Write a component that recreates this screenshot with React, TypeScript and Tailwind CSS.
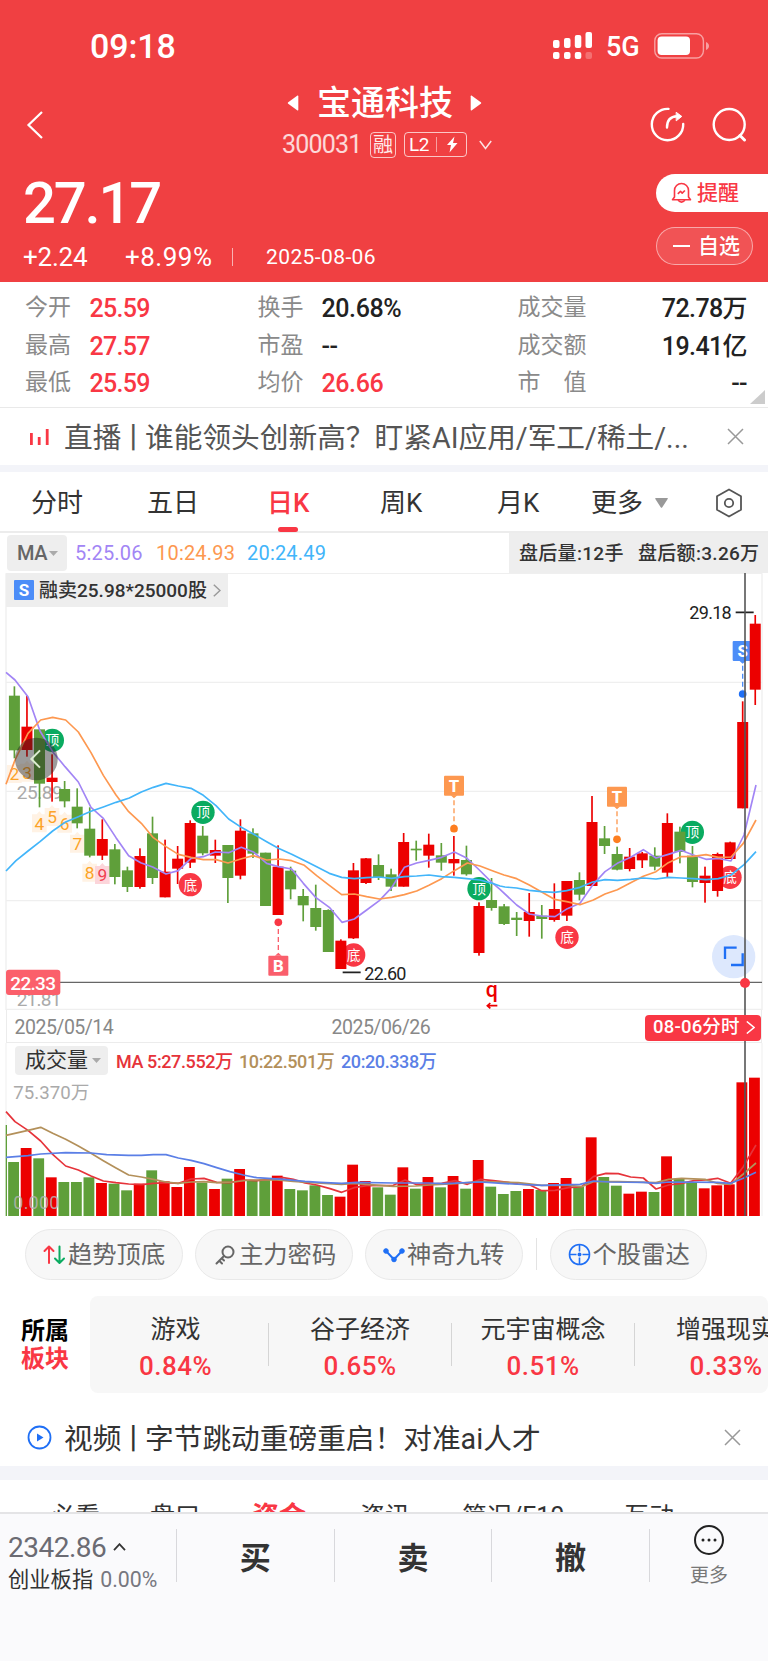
import React from 'react';
import clsx from 'clsx';

type Candle = [high: number, top: number, bottom: number, low: number, up: 0 | 1];

// chart units are a third of a pixel
const STEP = 37.67;

const candles: Candle[] = [
  [349, 377, 541, 565, 0], [377, 470, 540, 560, 1], [478, 478, 641, 712, 0], [553, 623, 636, 695, 1],
  [633, 657, 694, 712, 0], [655, 710, 760, 775, 0], [712, 776, 857, 862, 0], [748, 807, 857, 870, 1],
  [822, 838, 921, 943, 0], [890, 901, 951, 966, 0], [835, 858, 951, 956, 1], [740, 790, 924, 942, 0],
  [809, 905, 982, 982, 1], [828, 866, 896, 942, 1], [751, 759, 878, 894, 1], [768, 797, 850, 856, 0],
  [809, 840, 857, 879, 1], [825, 825, 924, 999, 0], [748, 782, 917, 928, 1], [775, 790, 851, 864, 0],
  [848, 848, 1008, 1008, 0], [826, 890, 1035, 1035, 1], [890, 902, 958, 988, 0], [957, 978, 1006, 1054, 0],
  [944, 1014, 1071, 1082, 0], [1018, 1020, 1146, 1146, 0], [1108, 1112, 1197, 1197, 1], [879, 901, 1105, 1107, 1],
  [864, 865, 939, 942, 1], [853, 885, 921, 930, 0], [896, 913, 950, 963, 0], [789, 816, 950, 950, 1],
  [812, 836, 841, 872, 0], [791, 824, 857, 893, 1], [819, 856, 878, 902, 0], [798, 867, 880, 917, 1],
  [827, 870, 913, 917, 0], [997, 1008, 1149, 1157, 1], [924, 990, 1014, 1022, 0], [1002, 1009, 1062, 1065, 0],
  [1026, 1043, 1050, 1098, 0], [969, 1026, 1053, 1100, 1], [1005, 1037, 1047, 1106, 0], [940, 1017, 1050, 1055, 1],
  [933, 933, 1037, 1053, 1], [907, 930, 974, 991, 0], [678, 756, 948, 948, 1], [768, 805, 828, 852, 0],
  [830, 852, 899, 901, 0], [834, 860, 897, 904, 1], [846, 850, 871, 894, 1], [832, 857, 890, 901, 0],
  [730, 759, 908, 921, 1], [770, 785, 846, 880, 0], [828, 857, 936, 952, 0], [890, 917, 939, 998, 1],
  [848, 852, 963, 980, 1], [815, 817, 867, 867, 1], [394, 456, 715, 715, 1], [135, 161, 359, 405, 1],
];

const volumes = [
  486, 444, 475, 532, 546, 546, 532, 549, 551, 571, 551, 511, 544, 561, 501, 548, 567, 536, 507, 540,
  538, 527, 567, 571, 556, 585, 590, 494, 543, 562, 584, 502, 566, 531, 562, 528, 566, 480, 560, 582,
  573, 567, 570, 549, 534, 560, 412, 531, 557, 581, 575, 576, 469, 537, 546, 565, 556, 553, 247, 233,
];

const MA5 = '18,307 45,330 84,380 120,483 158,545 195,590 235,636 273,712 310,745 348,803 386,857 422,878 458,891 498,912 535,902 573,865 610,860 646,846 686,848 724,832 762,847 800,880 835,890 875,897 910,940 947,982 988,1012 1026,1057 1063,1047 1100,1020 1138,992 1175,953 1213,892 1250,879 1287,871 1325,862 1363,846 1400,864 1438,900 1476,938 1500,958 1550,1005 1588,1032 1625,1038 1665,1040 1702,1016 1740,1000 1778,945 1815,905 1852,880 1892,862 1930,839 1968,864 2005,853 2043,841 2080,855 2118,868 2155,865 2193,873 2232,795 2268,645';
const MA10 = '18,643 45,570 84,490 122,450 158,442 197,450 235,486 273,548 310,616 348,675 386,725 424,760 460,803 498,830 535,853 573,862 610,869 648,869 684,879 722,867 760,857 800,870 838,867 875,872 913,886 950,917 988,946 1025,974 1063,972 1100,980 1138,987 1175,982 1213,974 1250,963 1287,946 1325,926 1363,902 1402,879 1440,888 1477,902 1512,915 1550,926 1588,945 1625,966 1663,988 1700,995 1740,1004 1780,990 1815,972 1852,959 1892,938 1930,919 1968,905 2005,878 2043,860 2080,859 2118,854 2155,862 2193,861 2230,820 2268,750';
const MA20 = '18,903 48,872 84,843 120,815 158,783 195,757 235,740 273,724 310,711 348,697 388,684 424,666 460,652 498,640 535,648 573,655 610,676 648,707 686,747 724,772 760,792 800,815 835,835 875,853 910,870 950,890 988,910 1025,922 1063,926 1100,923 1138,921 1175,925 1213,920 1250,918 1287,915 1325,920 1363,922 1400,926 1440,930 1477,940 1500,948 1515,951 1550,954 1588,961 1625,965 1663,967 1700,962 1740,952 1778,936 1815,929 1852,931 1892,928 1930,924 1968,927 2005,922 2043,924 2080,926 2118,929 2155,926 2193,915 2232,884 2268,845';

const VOL5 = '18,335 45,365 84,391 122,423 158,463 197,498 235,510 273,528 310,543 348,548 386,552 424,554 460,550 498,548 535,550 573,537 612,535 650,547 690,548 730,540 770,542 810,538 850,533 880,538 915,549 950,555 990,566 1025,577 1062,563 1100,557 1180,556 1215,540 1247,553 1285,553 1325,550 1365,542 1402,553 1442,538 1480,542 1518,546 1555,552 1590,555 1625,572 1665,571 1705,563 1745,560 1780,530 1818,520 1855,521 1892,531 1930,534 1968,567 2006,555 2045,550 2082,542 2115,540 2153,535 2192,550 2230,500 2268,435';
const VOL10 = '18,406 84,391 122,382 158,400 197,418 235,438 273,460 310,482 348,504 386,525 424,531 460,538 498,546 535,550 573,546 612,545 650,548 700,546 750,540 830,540 880,544 950,549 1025,553 1062,550 1100,553 1180,559 1247,558 1290,555 1365,551 1440,545 1555,548 1625,556 1705,556 1745,560 1780,545 1855,545 1968,548 2006,538 2045,535 2115,538 2153,550 2192,553 2230,522 2268,489';
const VOL20 = '18,472 84,467 122,462 197,458 273,459 320,464 386,466 424,466 460,464 498,464 535,474 573,481 612,491 650,503 690,515 730,525 770,533 850,538 915,544 960,547 1025,550 1070,547 1180,549 1285,549 1330,551 1440,546 1518,551 1625,556 1740,553 1780,543 1830,546 1930,547 1968,550 2006,546 2153,547 2192,550 2230,535 2268,517';

const turns = [
  { n: 2, x: 43, y: 612 }, { n: 3, x: 81, y: 608 }, { n: 4, x: 118, y: 760 }, { n: 5, x: 156, y: 741 },
  { n: 6, x: 194, y: 761 }, { n: 7, x: 232, y: 821 }, { n: 8, x: 269, y: 908 }, { n: 9, x: 307, y: 915 },
];

const peaks = [
  { t: '顶', x: 157, y: 511 }, { t: '顶', x: 609, y: 727 }, { t: '底', x: 571, y: 944 },
  { t: '底', x: 1061, y: 1155 }, { t: '顶', x: 1437, y: 956 }, { t: '底', x: 1701, y: 1102 },
  { t: '顶', x: 2077, y: 787 }, { t: '底', x: 2190, y: 922 },
];

const trades = [
  { t: 'T', x: 1362, y: 617, dot: 776, fill: '#fd9850', dotFill: '#fd7e20' },
  { t: 'T', x: 1851, y: 650, dot: 808, fill: '#fd9850', dotFill: '#fd7e20' },
  { t: 'S', x: 2228, y: 213, dot: 372, fill: '#4c8df8', dotFill: '#1f6ff5' },
  { t: 'B', x: 835, y: 1157, dot: 1057, fill: '#fa5f6c', dotFill: '#f93744' },
];

function StatusBar() {
  return (
    <div className="mt-4 flex h-[60px] items-center pl-[90px] text-white">
      <span className="w-[463px] text-[34px] font-medium leading-none tracking-[-0.1px]">09:18</span>
      <svg className="h-7 w-10" viewBox="0 0 40 28" fill="#fff">
        <rect x="0" y="8" width="6.5" height="8" rx="2" />
        <rect x="11" y="6" width="6.5" height="10" rx="2" />
        <rect x="21.8" y="3" width="6.5" height="13" rx="2" />
        <rect x="32.5" y="0" width="6.5" height="16" rx="2" />
        <rect x="0" y="20" width="6.5" height="7" rx="2" />
        <rect x="11" y="20" width="6.5" height="7" rx="2" />
        <rect x="21.8" y="20" width="6.5" height="7" rx="2" />
        <rect x="32.5" y="20" width="6.5" height="7" rx="2" opacity=".25" />
      </svg>
      <span className="ml-[13px] w-[48px] pt-0.5 text-[27px] font-medium leading-none">5G</span>
      <svg className="h-[26px] w-[56px]" viewBox="0 0 56 26">
        <rect x=".8" y=".8" width="48.6" height="24.2" rx="7" fill="none" stroke="#fff" strokeOpacity=".5" strokeWidth="1.4" />
        <rect x="3.6" y="3.6" width="32.4" height="18.4" rx="4" fill="#fff" />
        <path d="M52 9c4 1.5 4 6.5 0 8z" fill="#fff" opacity=".5" />
      </svg>
    </div>
  );
}

function Header() {
  return (
    <header className="h-[282px] shrink-0 overflow-hidden bg-[#f04042] text-white">
      <StatusBar />
      <div className="flex h-[97px] items-center pl-[26px]">
        <svg className="h-[30px] w-[18px]" viewBox="0 0 18 30" fill="none" stroke="#fff" strokeWidth="2.2">
          <path d="M16 2 2.5 15 16 28" />
        </svg>
        <div className="ml-[236px] flex h-full w-[214px] flex-col pt-[9px]">
          <div className="flex h-9 items-center">
            <svg className="ml-[7px] h-4 w-3" viewBox="0 0 12 16" fill="#fff">
              <path d="M10.5.6 1.2 7.2q-1 .8 0 1.6l9.3 6.6q.8.4.8-.6V1.2q0-1-.8-.6z" />
            </svg>
            <span className="ml-[18px] w-[141px] text-[34px] font-medium leading-9">宝通科技</span>
            <svg className="ml-3 h-4 w-3" viewBox="0 0 12 16" fill="#fff">
              <path d="M1.5.6l9.3 6.6q1 .8 0 1.6l-9.3 6.6q-.8.4-.8-.6V1.2q0-1 .8-.6z" />
            </svg>
          </div>
          <div className="mt-[10px] flex h-[27px] items-center pl-0.5">
            <span className="w-[88px] text-[25px] leading-none tracking-[-0.8px] text-white/80">300031</span>
            <span className="flex h-[26px] w-[26px] items-center justify-center rounded border border-white/70 text-[20px] leading-none text-white/90">融</span>
            <span className="ml-2 flex h-[25px] w-[63px] items-center rounded border border-white/70 pl-1 text-[19px] leading-none tracking-[-0.5px]">
              L2
              <i className="ml-[7px] h-[15px] w-px bg-white/50" />
              <svg className="ml-[9px] h-[17px] w-3" viewBox="0 0 12 17" fill="#fff">
                <path d="M8.5.5 1 9h4L3.5 16.5 11.5 7H7z" />
              </svg>
            </span>
            <svg className="ml-3 h-2.5 w-[13px]" viewBox="0 0 13 10" fill="none" stroke="#fff" strokeOpacity=".85" strokeWidth="1.5">
              <path d="M.8 1 6.5 8.5 12.2 1" />
            </svg>
          </div>
        </div>
        <div className="ml-[156px] flex gap-[27px]">
          <svg className="h-[35px] w-[35px]" viewBox="0 0 35 35" fill="none" stroke="#fff" strokeWidth="2.4" strokeLinecap="round">
            <path d="M18.5 1.9A15.7 15.7 0 1 0 33.2 17" />
            <path d="M17 20.5C17 13 20 9.5 27 9.3" />
            <path d="M26.5 5.5 31.8 9.4 26.5 13.6z" fill="#fff" strokeWidth="1" strokeLinejoin="round" />
          </svg>
          <svg className="h-[35px] w-[35px]" viewBox="0 0 35 35" fill="none" stroke="#fff" strokeWidth="2.4" strokeLinecap="round">
            <circle cx="17.2" cy="17.5" r="15.5" />
            <path d="M28 28.5 32.5 33" strokeWidth="3" />
          </svg>
        </div>
      </div>
      <div className="flex justify-between">
        <div className="pl-[23px]">
          <div className="h-[60px] text-[58px] font-medium leading-[60px] tracking-[-2.2px]">27.17</div>
          <div className="flex h-[48px] items-center text-[26px] leading-none">
            <span className="w-[102px] tracking-[-0.2px]">+2.24</span>
            <span className="w-[107px] tracking-[0.5px]">+8.99%</span>
            <i className="h-[18px] w-px bg-white/60" />
            <span className="ml-[33px] text-[21px] tracking-[0.4px]">2025-08-06</span>
          </div>
        </div>
        <div className="w-28 pt-px">
          <div className="flex h-[38px] items-center rounded-l-full bg-white pl-[15px] text-[21px] font-medium leading-none text-[#f93744]">
            <svg className="mr-[5px] h-[22px] w-[21px]" viewBox="0 0 21 22" fill="none" stroke="#f93744" strokeWidth="1.6" strokeLinejoin="round">
              <path d="M3.5 15V8.5a7 7 0 0 1 14 0V15l2 2.8H1.5z" />
              <path d="M7 18.3q3.5 3.5 7 0M6.8 11.8l2.7-2.5 1.700 1.8 2.7-2.6" />
            </svg>
            提醒
          </div>
          <div className="mt-[15px] flex h-[38px] w-[97px] items-center rounded-full border border-white/50 bg-white/10 pl-4 text-[21px] font-medium leading-none">
            <i className="mr-[8px] h-0.5 w-[17px] bg-white" />
            自选
          </div>
        </div>
      </div>
    </header>
  );
}

const stats = [
  ['今开', '25.59', true, '换手', '20.68%', false, '成交量', '72.78万'],
  ['最高', '27.57', true, '市盈', '--', false, '成交额', '19.41亿'],
  ['最低', '25.59', true, '均价', '26.66', true, '市　值', '--'],
] as const;

function Stats() {
  return (
    <section className="relative h-[126px] shrink-0 border-b border-[#e9e9e9] pt-[7px]">
      {stats.map(([a, av, ar, b, bv, br, c, cv]) => (
        <div key={a} className="flex h-[37.6px] items-center pl-[25px] pr-[21px] text-[23px] leading-none text-[#8a8a8a]">
          <span className="w-[64.5px]">{a}</span>
          <span className={clsx('w-[168px] pt-0.5 text-[25px] font-medium tracking-[-0.7px]', ar ? 'text-[#f93744]' : 'text-[#222]')}>{av}</span>
          <span className="w-[64px]">{b}</span>
          <span className={clsx('w-[196px] pt-0.5 text-[25px] font-medium tracking-[-0.4px]', br ? 'text-[#f93744]' : 'text-[#222]')}>{bv}</span>
          <span>{c}</span>
          <span className="ml-auto pt-0.5 text-[25px] font-medium tracking-[-0.6px] text-[#222]">{cv}</span>
        </div>
      ))}
      <svg className="absolute bottom-[3px] right-[3px] h-[14px] w-[15px]" viewBox="0 0 15 14" fill="#ccc">
        <path d="M15 0V14H0z" />
      </svg>
    </section>
  );
}

function CloseIcon() {
  return (
    <svg className="h-[17px] w-[17px]" viewBox="0 0 17 17" fill="none" stroke="#999" strokeWidth="1.5">
      <path d="M1 1 16 16M16 1 1 16" />
    </svg>
  );
}

const periods = [
  { label: '分时', w: 'w-[116px]' },
  { label: '五日', w: 'w-[120px]' },
  { label: '日K', w: 'w-[113px]', on: true },
  { label: '周K', w: 'w-[117px]' },
  { label: '月K', w: 'w-[94px]' },
];

function Periods() {
  return (
    <nav className="flex h-[61px] shrink-0 items-center border-b-2 border-[#ececec] pl-[31px] pt-0.5 text-[26px] leading-none text-[#333]">
      {periods.map(p => (
        <span key={p.label} className={clsx('relative', p.w, p.on && 'font-medium text-[#f93744]')}>
          {p.label}
          {p.on && <i className="absolute left-[11px] top-[37px] h-[5px] w-5 rounded-sm bg-[#f93744]" />}
        </span>
      ))}
      <span className="w-[64px]">更多</span>
      <svg className="h-[10px] w-[13px]" viewBox="0 0 13 10" fill="#999">
        <path d="M.5 0h12q.7.3 0 1.3L7.3 9.2q-.8 1-1.6 0L.5 1.3Q0 .3.5 0z" />
      </svg>
      <svg className="ml-[47px] h-[30px] w-[28px]" viewBox="0 0 28 30" fill="none" stroke="#555" strokeWidth="1.8" strokeLinejoin="round">
        <path d="M14 1.5 26 8.2V21.8L14 28.5 2 21.8V8.2z" />
        <circle cx="14" cy="15" r="4.2" />
      </svg>
    </nav>
  );
}

function Indicators() {
  return (
    <div className="flex h-[40px] shrink-0 items-center pl-[7px] text-[20px] leading-none">
      <span className="mr-2 flex h-9 w-[60px] items-center rounded bg-[#eee] pl-2.5 font-medium tracking-[-0.5px] text-[#666]">
        MA
        <svg className="ml-0.5 h-[5px] w-[9px]" viewBox="0 0 9 5" fill="#aaa"><path d="M0 0h9L4.5 5z" /></svg>
      </span>
      <span className="w-[81px] tracking-[0.2px] text-[#a285f5]">5:25.06</span>
      <span className="w-[91px] tracking-[0.2px] text-[#fd9850]">10:24.93</span>
      <span className="tracking-[0.2px] text-[#42b5fa]">20:24.49</span>
      <div className="ml-auto flex h-full w-[259px] items-center bg-[#eee] pl-2.5 text-[19px] font-medium text-[#333]">
        <span className="w-[119px] whitespace-nowrap tracking-[0.3px]">盘后量:12手</span>
        <span className="whitespace-nowrap tracking-[0.3px]">盘后额:3.26万</span>
      </div>
    </div>
  );
}

function PriceChart() {
  return (
    <div className="relative h-[437px] shrink-0">
      <svg className="block h-[437px] w-[768px] font-[Roboto,'Noto_Sans_CJK_SC',sans-serif]" viewBox="0 9 2304 1311">
        <g stroke="#efefef" strokeWidth="4">
          <path d="M18 10H2286M18 337H2286M18 664H2286M18 992H2286M18 1318H2286M18 10V1320M2286 10V1320" />
        </g>

        {turns.map(t => (
          <g key={t.n}>
            <path
              d={`M${t.x - 22} ${t.y - 27}h14l8-9 8 9h14v54h-44z`}
              fill={t.n === 9 ? '#fcd5da' : '#fff2e4'}
            />
            <text x={t.x} y={t.y + 19} fontSize="52" textAnchor="middle" fill={t.n === 9 ? '#f0404e' : '#fca327'}>{t.n}</text>
          </g>
        ))}
        {peaks.map(p => (
          <g key={p.x}>
            <circle cx={p.x} cy={p.y} r="35" fill={p.t === '顶' ? '#0aab60' : '#f93744'} />
            <text x={p.x} y={p.y + 15} fontSize="41" textAnchor="middle" fill="#fff">{p.t}</text>
          </g>
        ))}
        {trades.map(t => {
          const below = t.dot < t.y;
          const mid = t.y + 30;
          return (
            <g key={t.x}>
              <path d={`M${t.x} ${below ? t.dot + 20 : t.y + 74}V${below ? t.y - 8 : t.dot - 12}`} stroke={t.fill} strokeWidth="4" strokeDasharray="15 9" />
              <rect x={t.x - 30} y={t.y} width="60" height="60" rx="3" fill={t.fill} />
              <path d={below ? `M${t.x - 10} ${t.y}l10-9 10 9z` : `M${t.x - 10} ${t.y + 59}l10 9 10-9z`} fill={t.fill} />
              <text x={t.x} y={mid + 18} fontSize="50" fontWeight="800" textAnchor="middle" fill="#fff">{t.t}</text>
              <circle cx={t.x} cy={t.dot} r="11.5" fill={t.dotFill} />
            </g>
          );
        })}

        <text x="50" y="688" fontSize="57" textLength="138" fill="#aaa">25.89</text>
        <text x="50" y="1308" fontSize="57" textLength="134" fill="#aaa">21.81</text>

        {candles.map(([high, top, bottom, low, up], i) => {
          const x = 43.2 + i * STEP;
          const color = up ? '#ec0000' : '#5f9f3a';
          return (
            <g key={i} fill={color}>
              <rect x={x - 2.5} y={high} width="5" height={low - high} />
              <rect x={x - 16.5} y={top} width="33" height={bottom - top} />
            </g>
          );
        })}

        <g fill="none" strokeWidth="5" strokeLinejoin="round">
          <polyline points={MA5} stroke="#a285f5" />
          <polyline points={MA10} stroke="#fd9850" />
          <polyline points={MA20} stroke="#42b5fa" />
        </g>

        <text x="2068" y="148" fontSize="54" textLength="127" fill="#222">29.18</text>
        <path d="M2207 127h54M1028 1207h54" stroke="#222" strokeWidth="5" />
        <text x="1093" y="1229" fontSize="54" textLength="126" fill="#222">22.60</text>
        <text x="1475" y="1282" fontSize="64" fontWeight="500" textAnchor="middle" fill="#ec0000">q</text>
        <path d="M1492 1307h-28M1471 1299l-9 8 9 8" fill="none" stroke="#ec0000" strokeWidth="5" />

        <circle cx="109" cy="567" r="64" fill="#222" fillOpacity=".45" />
        <path d="M120 541 94 567 120 593" fill="none" stroke="#dceccf" strokeWidth="6" />

        <circle cx="2201" cy="1160" r="65" fill="#dde8fd" />
        <path d="M2175 1167v-34h35M2193 1185h35v-35" fill="none" stroke="#1f6ff5" strokeWidth="7" />
        <path d="M18 1237H2286" stroke="#666" strokeWidth="4" />
        <rect x="18" y="1199" width="163" height="76" rx="9" fill="#fb5f6b" />
        <text x="31" y="1259" fontSize="57" fontWeight="500" textLength="137" fill="#fff">22.33</text>
      </svg>
      <div className="absolute left-1.5 top-0 flex h-[34px] w-[222px] items-center bg-[#eee] pl-2 text-[19px] font-medium leading-none text-[#333]">
        <span className="mr-[5px] flex h-5 w-5 items-center justify-center rounded-[1px] bg-[#4c8df8] text-[17px] font-bold text-white">S</span>
        <span className="w-[174px] whitespace-nowrap">融卖25.98*25000股</span>
        <svg className="h-[13px] w-[8px]" viewBox="0 0 8 13" fill="none" stroke="#999" strokeWidth="1.5"><path d="M.8.8 7 6.5.8 12.2" /></svg>
      </div>
    </div>
  );
}

function DateAxis() {
  return (
    <div className="ml-[5.5px] mr-[6px] flex h-[33px] shrink-0 items-center border-x border-b border-[#ececec] pl-2 pt-[3px] text-[19.5px] leading-none tracking-[-0.5px] text-[#888]">
      <span className="w-[317px]">2025/05/14</span>
      <span>2025/06/26</span>
      <span className="relative z-10 ml-auto flex h-[26px] w-[116px] items-center rounded bg-[#f93744] pl-2 text-[18.5px] font-medium tracking-[0.2px] text-white">
        <span className="w-[93px] whitespace-nowrap">08-06分时</span>
        <svg className="h-[13px] w-[9px]" viewBox="0 0 9 13" fill="none" stroke="#fff" strokeWidth="1.5"><path d="M.8.5 8 6.5.8 12.5" /></svg>
      </span>
    </div>
  );
}

function VolumeChart() {
  return (
    <div className="relative h-[173px] shrink-0">
      <svg className="block h-[173px] w-[768px] font-[Roboto,'Noto_Sans_CJK_SC',sans-serif]" viewBox="0 129 2304 519">
        <path d="M18 129V648M2286 129V648" stroke="#efefef" strokeWidth="3" />
        <rect x="17" y="375" width="4" height="273" fill="#5f9f3a" />
        {volumes.map((top, i) => (
          <rect key={i} x={24.5 + i * STEP} y={top} width="32.5" height={648 - top} fill={candles[i][4] ? '#ec0000' : '#5f9f3a'} />
        ))}
        <g fill="none" strokeWidth="5" strokeLinejoin="round">
          <polyline points={VOL5} stroke="#e6333a" />
          <polyline points={VOL10} stroke="#b3905a" />
          <polyline points={VOL20} stroke="#5b7fe6" />
        </g>
        <text x="40" y="297" fontSize="56" textLength="228" fill="#aaa">75.370万</text>
        <text x="40" y="627" fontSize="54" textLength="138" fill="#b5b5b5" fillOpacity=".85">0.000</text>
      </svg>
      <div className="absolute left-[15px] top-[3px] flex h-[29px] items-center text-[18px] font-medium leading-none tracking-[-0.4px]">
        <span className="mr-[8px] flex h-full w-[93px] items-center rounded bg-[#eee] pl-2.5 text-[21px] font-normal tracking-normal text-[#333]">
          成交量
          <svg className="ml-1 h-[5px] w-[9px]" viewBox="0 0 9 5" fill="#aaa"><path d="M0 0h9L4.5 5z" /></svg>
        </span>
        <span className="w-[123px] pt-0.5 text-[#e6333a]">MA 5:27.552万</span>
        <span className="w-[102px] pt-0.5 text-[#b3905a]">10:22.501万</span>
        <span className="pt-0.5 text-[#5b7fe6]">20:20.338万</span>
      </div>
    </div>
  );
}

function Chips() {
  const chip = 'flex h-[51px] w-[157.5px] items-center rounded-full border border-[#e9e9e9] bg-[#f7f7f7] pl-[17px]';
  return (
    <div className="flex h-[80px] shrink-0 items-start gap-[12.5px] pl-[25px] pt-[13px] text-[24.3px] leading-none text-[#666]">
      <div className={chip}>
        <svg className="mr-0.5 h-5 w-[23px]" viewBox="0 0 23 20" fill="none" strokeWidth="2" strokeLinecap="round" strokeLinejoin="round">
          <path d="M6 18V2M1.5 6 6 1.5 10.5 6" stroke="#f93744" />
          <path d="M16.5 1.5V17.5M12 13.5l4.5 4.5 4.5-4.5" stroke="#0aab60" />
        </svg>
        <span className="pt-0.5">趋势顶底</span>
      </div>
      <div className={chip}>
        <svg className="ml-0.5 mr-1 h-5 w-[20px]" viewBox="0 0 20 20" fill="none" stroke="#666" strokeWidth="2" strokeLinecap="round">
          <circle cx="13" cy="7" r="5.5" />
          <path d="M9 11 1.5 18.5M4.500 16l2.5 2.5M7 13.5l2 2" />
        </svg>
        <span className="pt-0.5">主力密码</span>
      </div>
      <div className={chip}>
        <svg className="mr-0.5 h-5 w-[22px]" viewBox="0 0 22 20" fill="#1f6ff5" stroke="#1f6ff5">
          <path d="M3 6 11 14.5 19 6" fill="none" strokeWidth="2" />
          <circle cx="3" cy="6" r="2.3" /><circle cx="11" cy="14.5" r="2.3" /><circle cx="19" cy="6" r="2.3" />
        </svg>
        <span className="pt-0.5">神奇九转</span>
      </div>
      <i className="ml-px mt-[9px] h-8 w-px bg-[#e3e3e3]" />
      <div className={chip}>
        <svg className="mr-0.5 h-[23px] w-[23px]" viewBox="0 0 23 23" fill="none" stroke="#1f6ff5" strokeWidth="1.6">
          <circle cx="11.5" cy="11.5" r="10" />
          <path d="M11.5 1.5v7M11.5 14.5v7M1.5 11.5h7M14.5 11.5h7" />
          <circle cx="11.5" cy="11.5" r="1.2" fill="#1f6ff5" />
        </svg>
        <span className="pt-0.5">个股雷达</span>
      </div>
    </div>
  );
}

const sectors = [
  ['游戏', '0.84%'],
  ['谷子经济', '0.65%'],
  ['元宇宙概念', '0.51%'],
  ['增强现实', '0.33%'],
];

function Sectors() {
  return (
    <section className="flex h-[97px] shrink-0">
      <div className="w-[90px] pl-[21px] pt-[21px] text-[24px] font-bold leading-7 text-black">
        <div>所属</div>
        <div className="text-[#f93744]">板块</div>
      </div>
      <div className="flex w-[678px] overflow-hidden rounded-lg bg-[#f7f7f7] pt-4">
        {sectors.map(([name, pct], i) => (
          <div key={name} className="flex shrink-0">
            {i > 0 && <i className="mt-[11px] h-[43px] w-px bg-[#d5d5d5]" />}
            <div className={clsx('flex flex-col items-center whitespace-nowrap', i > 0 ? 'w-[182px]' : 'w-[178px] pr-[7px]')}>
              <span className="h-[34px] text-[25px] leading-[35px] text-[#333]">{name}</span>
              <span className="mt-[5px] h-[30px] text-[26px] font-medium leading-[31px] tracking-[0.5px] text-[#f93744]">{pct}</span>
            </div>
          </div>
        ))}
      </div>
    </section>
  );
}

function BottomTabs() {
  return (
    <div className="flex h-[32px] shrink-0 overflow-hidden whitespace-nowrap pl-[50px] pt-[21px] text-[25px] leading-[32px] text-[#333]">
      <span className="w-[100px]">必看</span>
      <span className="w-[102px]">盘口</span>
      <span className="w-[108px] text-[27px] font-bold text-[#f93744]">资金</span>
      <span className="w-[102px]">资讯</span>
      <span className="w-[162px]">简况/F10</span>
      <span>互动</span>
    </div>
  );
}

function TradeBar() {
  return (
    <footer className="flex h-[149px] shrink-0 items-start border-t-2 border-[#e4e4e6] bg-[#fafafc] text-[#333]">
      <div className="w-[176px] pl-2 pt-[18px]">
        <div className="flex h-8 items-center text-[28px] leading-none tracking-[-0.5px] text-[#6b6b73]">
          2342.86
          <svg className="mb-0.5 ml-[7px] h-2 w-[13px]" viewBox="0 0 13 8" fill="none" stroke="#333" strokeWidth="1.8"><path d="M1 7.2 6.5 1.2 12 7.2" /></svg>
        </div>
        <div className="mt-[2px] flex h-[28px] items-center whitespace-nowrap text-[21.3px] leading-none">
          创业板指
          <span className="ml-[7px] text-[#77777f]">0.00%</span>
        </div>
      </div>
      {['买', '卖', '撤'].map(t => (
        <div key={t} className="flex w-[157.6px] items-center">
          <i className="mt-[15px] h-[53px] w-px bg-[#d8d8dc]" />
          <span className="mt-[20px] flex-1 text-center text-[31px] font-bold leading-none">{t}</span>
        </div>
      ))}
      <i className="mt-[15px] h-[53px] w-px bg-[#d8d8dc]" />
      <div className="flex flex-1 flex-col items-center pt-2.5">
        <svg className="h-[32px] w-8" viewBox="0 0 32 32" fill="none" stroke="#222" strokeWidth="2">
          <circle cx="16" cy="16" r="14" />
          <path d="M10 16h.01M16 16h.01M22 16h.01" strokeWidth="3" strokeLinecap="round" />
        </svg>
        <span className="mt-[8px] text-[19px] leading-6 text-[#777]">更多</span>
      </div>
    </footer>
  );
}

export default function App() {
  return (
    <div className="flex h-[1662px] w-[768px] flex-col overflow-hidden bg-white font-[Roboto,'Noto_Sans_CJK_SC',sans-serif]">
      <Header />
      <Stats />

      {/* Live banner */}
      <div className="flex h-[57px] shrink-0 items-center pl-[30px] text-[28.7px] leading-none text-[#555]">
        <svg className="mr-[15px] h-4 w-[19px]" viewBox="0 0 19 16" fill="#f93744">
          <rect x="0" y="4" width="2.8" height="12" /><rect x="7.8" y="8" width="2.8" height="8" /><rect x="15.8" y="0" width="2.8" height="16" />
        </svg>
        <span className="w-[663px] whitespace-nowrap pt-[3px]">
          直播<span className="-mx-[2.5px]">丨</span>谁能领头创新高？盯紧AI应用/军工/稀土/...
        </span>
        <CloseIcon />
      </div>
      <div className="h-[7px] shrink-0 bg-[#f3f4f9]" />

      {/* Charts */}
      <Periods />
      <Indicators />
      <div className="relative shrink-0">
        <PriceChart />
        <DateAxis />
        <VolumeChart />
        <i className="absolute left-[744px] top-0 h-[643px] w-[1.5px] bg-[#555]/80" />
        <i className="absolute left-[740px] top-[404.5px] h-[10px] w-[10px] rounded-full bg-[#f93744]" />
      </div>

      <Chips />
      <Sectors />

      {/* Video banner */}
      <div className="flex h-[73px] shrink-0 items-center pl-[27px] pt-[16px] text-[28.7px] leading-none text-[#333]">
        <svg className="mr-[12px] h-[25px] w-[25px]" viewBox="0 0 25 25" fill="none" stroke="#1f6ff5" strokeWidth="1.8">
          <circle cx="12.5" cy="12.5" r="11" />
          <path d="M10 8.5v8l6.5-4z" fill="#1f6ff5" stroke="none" />
        </svg>
        <span className="w-[660px] whitespace-nowrap pt-[4px]">
          视频<span className="-mx-[2.5px]">丨</span>字节跳动重磅重启！对准ai人才
        </span>
        <CloseIcon />
      </div>
      <div className="h-[14px] shrink-0 bg-[#f3f4f9]" />
      <BottomTabs />
      <TradeBar />
    </div>
  );
}
